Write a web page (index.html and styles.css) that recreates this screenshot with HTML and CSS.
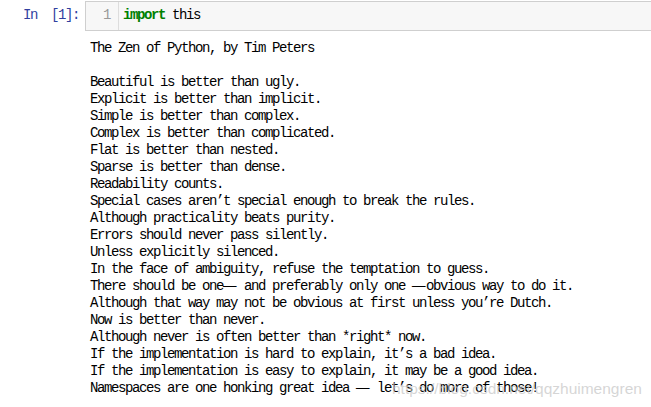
FILE: index.html
```html
<!DOCTYPE html>
<html lang="en">
<head>
<meta charset="utf-8">
<title>The Zen of Python</title>
<link rel="stylesheet" href="styles.css">
</head>
<body>
<div class="nb">
  <div class="cell">
    <div class="prompt">In&nbsp;&nbsp;[1]:</div>
    <div class="input">
      <div class="gutter">1</div>
      <div class="code"><span class="kw">import</span> this</div>
    </div>
  </div>
  <div class="output">
<pre class="out">The Zen of Python, by Tim Peters

Beautiful is better than ugly.
Explicit is better than implicit.
Simple is better than complex.
Complex is better than complicated.
Flat is better than nested.
Sparse is better than dense.
Readability counts.
Special cases aren’t special enough to break the rules.
Although practicality beats purity.
Errors should never pass silently.
Unless explicitly silenced.
In the face of ambiguity, refuse the temptation to guess.
There should be one<span class="wd">—</span> and preferably only one <span class="wd">—</span>obvious way to do it.
Although that way may not be obvious at first unless you’re Dutch.
Now is better than never.
Although never is often better than *right* now.
If the implementation is hard to explain, it’s a bad idea.
If the implementation is easy to explain, it may be a good idea.
Namespaces are one honking great idea <span class="wd">—</span> let’s do more of those!</pre>
  </div>
  <div class="watermark">https://blog.csdn.net/qqzhuimengren</div>
</div>
</body>
</html>
```
FILE: styles.css
```css
html, body {
  margin: 0;
  padding: 0;
  background: #ffffff;
  overflow: hidden;
}

.nb {
  position: relative;
  width: 651px;
  height: 407px;
  overflow: hidden;
  font-family: "Liberation Mono", "DejaVu Sans Mono", monospace;
  font-size: 14px;
  letter-spacing: -1.4px;
  line-height: 17px;
  color: #000000;
}

.cell {
  display: flex;
  margin-top: 1px;
}

.prompt {
  width: 85px;
  flex: none;
  box-sizing: border-box;
  padding-right: 6px;
  padding-top: 6px;
  text-align: right;
  color: #303f9f;
  white-space: nowrap;
}

.input {
  display: flex;
  flex: none;
  width: 600px;
  height: 30px;
  box-sizing: border-box;
  border: 1px solid #cfcfcf;
  background: #f7f7f7;
}

.gutter {
  width: 33px;
  flex: none;
  box-sizing: border-box;
  padding: 5px 8px 0 0;
  text-align: right;
  color: #999999;
  border-right: 1px solid #dddddd;
}

.code {
  padding: 5px 0 0 4px;
  white-space: pre;
}

.kw {
  color: #008000;
  font-weight: bold;
}

.output {
  margin-top: 9px;
  padding-left: 90px;
}

.out {
  margin: 0;
  font: inherit;
  white-space: pre;
}

.wd {
  display: inline-block;
  width: 14px;
  letter-spacing: 0;
  transform: scaleX(1.6);
  transform-origin: left center;
}

.watermark {
  position: absolute;
  left: 392px;
  top: 380px;
  font-family: "Liberation Sans", Arial, sans-serif;
  font-size: 15.5px;
  letter-spacing: 0;
  line-height: 18px;
  color: rgba(200, 200, 200, 0.75);
  white-space: nowrap;
}
```
